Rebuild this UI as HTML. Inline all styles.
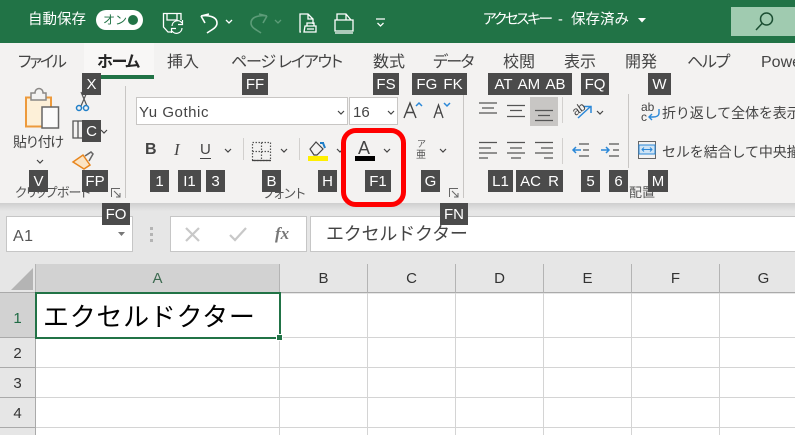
<!DOCTYPE html>
<html lang="ja"><head><meta charset="utf-8"><style>
html,body{margin:0;padding:0;width:795px;height:435px;overflow:hidden}
body{position:relative;background:#fff;font-family:"Liberation Sans","Noto Sans CJK JP",sans-serif}
div,svg{position:absolute}
#w{left:0;top:0;width:795px;height:435px;overflow:hidden}
.t{white-space:nowrap;color:#444;line-height:1}
.p{font-feature-settings:"palt"}
.tab{font-size:16px;top:55px;color:#444;white-space:nowrap;line-height:1;font-feature-settings:"palt"}
.k{position:absolute;background:#4b4b4b;color:#fff;font-size:15px;height:22px;line-height:23px;text-align:center;white-space:nowrap;z-index:5}
svg{overflow:visible}
.sep{background:#c8c6c4;width:1px}
.col{top:264px;height:29px;background:#e6e6e6;border-right:1px solid #b4b4b4;box-sizing:border-box;text-align:center;font-size:15px;line-height:29px;color:#333;border-bottom:1px solid #aaa}
.row{left:0;width:36px;background:#e6e6e6;box-sizing:border-box;border-bottom:1px solid #aaa;border-right:1px solid #aaa;text-align:center;font-size:15px;color:#333}
.h{left:36px;width:759px;height:1px;background:#d4d4d4}
.v{top:293px;width:1px;height:142px;background:#d4d4d4}
</style></head><body><div id="w">
<!-- title bar -->
<div style="left:0;top:0;width:795px;height:43px;background:#217346"></div>
<div class="t" style="left:28px;top:13px;font-size:14.5px;color:#fff">自動保存</div>
<div style="left:96px;top:10px;width:47px;height:20px;border-radius:10px;background:#fff"></div>
<div class="t" style="left:103px;top:14px;font-size:12px;color:#217346">オン</div>
<div style="left:128px;top:15px;width:10px;height:10px;border-radius:5px;background:#217346"></div>
<svg style="left:0;top:0" width="795" height="43" fill="none" stroke="#fff" stroke-width="1.3">
<path d="M181 20V13.500H163.500V27L168 32H171M167 14V20H177V14"/>
<path d="M172 26A5.500 5.500 0 0 1 182 23M182.500 20V24.500H178M182 28A5.500 5.500 0 0 1 172 31M171.500 33V28.500H176" stroke-width="1.200"/>
<path d="M201 16L205 23M201 16L209 14M201 16C207 15 217 16 217 23C217 28 211 30 207 33" stroke-width="1.600"/>
<path d="M226 20L229 23L232 20"/>
<path d="M267 16L263 23M267 16L259 14M267 16C261 15 251 16 251 23C251 28 257 30 261 33" stroke="#5c9c78" stroke-width="1.600"/>
<path d="M275 20L278 23L281 20" stroke="#5c9c78"/>
<path d="M301 32H300V14H308L313 19V24M308 14V19H313M305 26H316V32H304ZM307 26V23H314V26M307 29H314"/>
<path d="M337 20V14H346L351 20M346 14V20H351M335 20H353V31H335ZM335 33H353"/>
<path d="M376 19H385M377.500 23L380.500 26L383.500 23"/>
</svg>
<div class="t p" style="left:483px;top:13px;font-size:14.5px;color:#fff;letter-spacing:-2.100px">アクセスキー</div>
<div class="t" style="left:558px;top:13px;font-size:14.5px;color:#fff">-</div>
<div class="t" style="left:571px;top:13px;font-size:14.5px;color:#fff">保存済み</div>
<svg style="left:638px;top:18px" width="10" height="5"><path d="M0 0H8L4 4.500Z" fill="#fff"/></svg>
<div style="left:731px;top:7px;width:64px;height:29px;background:#a0cbb0"></div>
<svg style="left:754px;top:11px" width="22" height="22" fill="none" stroke="#1c4f33" stroke-width="1.500"><circle cx="12.500" cy="8" r="6"/><path d="M8 12.500L2 19"/></svg>

<!-- tabs -->
<div style="left:0;top:43px;width:795px;height:160px;background:#f3f2f1"></div>
<div style="left:84px;top:43px;width:70px;height:36px;background:#f8f7f6"></div>
<div style="left:84px;top:75px;width:70px;height:4px;background:#217346"></div>
<div class="tab" style="left:18px;letter-spacing:-2.200px">ファイル</div>
<div class="tab" style="left:97px;font-weight:bold;color:#262626;letter-spacing:-1.300px">ホーム</div>
<div class="tab" style="left:167px">挿入</div>
<div class="tab" style="left:231px;letter-spacing:-1.200px">ページ レイアウト</div>
<div class="tab" style="left:373px">数式</div>
<div class="tab" style="left:433px;letter-spacing:-1.600px">データ</div>
<div class="tab" style="left:503px">校閲</div>
<div class="tab" style="left:564px">表示</div>
<div class="tab" style="left:625px">開発</div>
<div class="tab" style="left:687px;letter-spacing:-1.300px">ヘルプ</div>
<div class="tab" style="left:761px">Power</div>

<!-- shadow + formula bar -->
<div style="left:0;top:203px;width:795px;height:61px;background:#e6e6e6"></div>
<div style="left:0;top:203px;width:795px;height:8px;background:linear-gradient(#cfcfcf,#e6e6e6)"></div>

<!-- clipboard -->
<svg style="left:0;top:85px" width="125" height="105" fill="none">
<rect x="26" y="12.500" width="25" height="29" fill="#fdf0d8" stroke="#ed9a3c" stroke-width="2"/>
<path d="M31 8H35C35 2 43 2 43 8H46V15H31Z" fill="#f3f2f1" stroke="#8a8886" stroke-width="1.500"/>
<rect x="42" y="22" width="16.500" height="21" fill="#fbfbfb" stroke="#666" stroke-width="1.500"/>
<path d="M37 75L40 78L43 75" stroke="#444" stroke-width="1.200"/>
<path d="M81 7L87 21M87 7L81 21" stroke="#555" stroke-width="1.200"/>
<circle cx="79" cy="23" r="2.500" stroke="#1f7fc8" stroke-width="1.500"/><circle cx="86" cy="23" r="2.500" stroke="#1f7fc8" stroke-width="1.500"/>
<path d="M82 36H73V53H82M78 36V53" stroke="#555" stroke-width="1.300"/>
<path d="M101 45L104 48L107 45" stroke="#444" stroke-width="1.200"/>
<path d="M73 77L83 70L90 80L84 84Z" fill="#fbe4c4" stroke="#e8861e" stroke-width="1.500"/>
<path d="M85 71L91 67L93 69L89 76" stroke="#666" stroke-width="1.500"/>
</svg>
<div class="t" style="left:13px;top:135px;font-size:14px;letter-spacing:-1.600px">貼り付け</div>
<div class="t p" style="left:15px;top:186px;font-size:13px;color:#555;letter-spacing:-.7px">クリップボード</div>
<svg style="left:111px;top:188px" width="10" height="10" fill="none" stroke="#666"><path d="M.5 9V.5H9M3 3L9 9M5 9H9V5"/></svg>
<div class="sep" style="left:125px;top:86px;height:112px"></div>

<!-- font group -->
<div style="left:136px;top:97px;width:212px;height:28px;box-sizing:border-box;background:#fff;border:1px solid #c8c6c4"></div>
<div class="t" style="left:139px;top:105px;font-size:15px;color:#444;letter-spacing:.55px">Yu Gothic</div>
<div style="left:349px;top:97px;width:49px;height:28px;box-sizing:border-box;background:#fff;border:1px solid #c8c6c4"></div>
<div class="t" style="left:353px;top:105px;font-size:15px">16</div>
<svg style="left:0;top:85px" width="470" height="120" fill="none" stroke="#444" stroke-width="1.200">
<path d="M338 26L341 29L344 26M388 26L391 29L394 26"/>
<path d="M404 33L410 18L416 33M406 27.500H414" stroke-width="1.400"/>
<path d="M416 21L419 18L422 21" stroke="#2b88d8" stroke-width="1.500"/>
<path d="M434 33L438.500 20L443 33M435.500 28H441.500" stroke-width="1.300"/>
<path d="M444 18L447 21L450 18" stroke="#2b88d8" stroke-width="1.500"/>
<path d="M225 64L228 67L231 64M281 64L284 67L287 64M337 64L340 67L343 64M384 64L387 67L390 64M440 64L443 67L446 64"/>
<path d="M252.500 57.500H270.500V75.500H252.500ZM252.500 66.500H270.500M261.500 57.500V75.500" stroke-dasharray="1.500 1.500" stroke="#555"/>
<path d="M252 75.500H271" stroke="#444"/>
<path d="M310 64L316 57L323 64L317 70H314Z" stroke="#444"/>
<path d="M323 58L325 63" stroke="#1f7fc8" stroke-width="2"/>
<path d="M320 58H324" stroke="#1f7fc8" stroke-width="2"/>
</svg>
<div style="left:308px;top:156px;width:20px;height:5px;background:#ffef00"></div>
<div class="t" style="left:145px;top:142px;font-size:16px;font-weight:bold;color:#444">B</div>
<div class="t" style="left:174px;top:141px;font-size:17px;font-style:italic;font-family:'Liberation Serif',serif;color:#444">I</div>
<div class="t" style="left:200px;top:142px;font-size:15px;color:#444">U</div>
<div style="left:200px;top:158px;width:11px;height:1px;background:#444"></div>
<div class="sep" style="left:243px;top:138px;height:22px;background:#d2d0ce"></div>
<div class="sep" style="left:299px;top:138px;height:22px;background:#d2d0ce"></div>
<div class="t" style="left:358px;top:139px;font-size:18px;color:#444">A</div>
<div style="left:355px;top:156px;width:20px;height:5px;background:#000"></div>
<div class="t" style="left:417px;top:140px;font-size:9px;color:#555">ア</div>
<div class="t" style="left:416px;top:151px;font-size:10px;color:#555">亜</div>
<div class="t p" style="left:263px;top:187px;font-size:13px;color:#555">フォント</div>
<svg style="left:449px;top:188px" width="10" height="10" fill="none" stroke="#666"><path d="M.5 9V.5H9M3 3L9 9M5 9H9V5"/></svg>
<div class="sep" style="left:463px;top:86px;height:112px"></div>

<!-- alignment -->
<div style="left:530px;top:97px;width:28px;height:29px;background:#c8c6c4"></div>
<svg style="left:470px;top:85px" width="180" height="90" fill="none" stroke="#555" stroke-width="1.200">
<path d="M9 18H27M12 23H24M9 28H27"/>
<path d="M37 20.500H55M40 25.500H52M37 31.500H55"/>
<path d="M65 25.500H83M68 30.500H80M65 35.500H83"/>
<path d="M9 57.500H27M9 63H21M9 68H27M9 73H18"/>
<path d="M37 57.500H55M40 63H52M37 68H55M41 73H51"/>
<path d="M65 57.500H83M71 63H83M65 68H83M74 73H83"/>
<path d="M108 33L120 22M114 21.500H121V28" stroke="#2b88d8" stroke-width="1.500"/>
<path d="M127 26L130 29L133 26" stroke="#444"/>
<path d="M111 65H103M106 62L103 65L106 68" stroke="#2b88d8" stroke-width="1.500"/>
<path d="M109 59H119M113 65H119M109 71H119M139 59H149M143 65H149M139 71H149"/>
<path d="M131 65H139M136 62L139 65L136 68" stroke="#2b88d8" stroke-width="1.500"/>
</svg>
<div class="sep" style="left:562px;top:97px;height:26px;background:#d2d0ce"></div>
<div class="sep" style="left:562px;top:138px;height:26px;background:#d2d0ce"></div>
<div class="t" style="left:572px;top:103px;font-size:12px;transform:rotate(-35deg);color:#444">ab</div>
<div class="sep" style="left:628px;top:94px;height:74px"></div>

<div class="t" style="left:641px;top:102px;font-size:12px;line-height:10px;color:#444">ab<br>c</div>
<svg style="left:648px;top:108px" width="14" height="12" fill="none" stroke="#2b88d8" stroke-width="1.400"><path d="M11 1V5C11 8 8 9 5 9H1M4 6L1 9L4 12"/></svg>
<div class="t" style="left:662px;top:106px;font-size:14px;letter-spacing:-.1px">折り返して全体を表示する</div>
<svg style="left:638px;top:141px" width="19" height="19" fill="none"><rect x=".5" y=".5" width="17" height="17" stroke="#666"/><rect x="1" y="4" width="16" height="9" fill="#cfe4f5" stroke="#2b88d8"/><path d="M4 8.500H14M6 6.500L4 8.500L6 10.500M12 6.500L14 8.500L12 10.500" stroke="#2b88d8"/></svg>
<div class="t" style="left:662px;top:145px;font-size:14px;letter-spacing:-.1px">セルを結合して中央揃え</div>
<div class="t" style="left:629px;top:186px;font-size:13px;color:#555">配置</div>

<!-- key tips -->
<div class="k" style="left:82px;top:73px;width:19px">X</div>
<div class="k" style="left:242px;top:73px;width:26px">FF</div>
<div class="k" style="left:373px;top:73px;width:26px">FS</div>
<div class="k" style="left:412px;top:73px;width:55px;word-spacing:2px">FG FK</div>
<div class="k" style="left:488px;top:73px;width:84px;word-spacing:2px">AT AM AB</div>
<div class="k" style="left:581px;top:73px;width:28px">FQ</div>
<div class="k" style="left:648px;top:73px;width:23px">W</div>
<div class="k" style="left:82px;top:120px;width:19px">C</div>
<div class="k" style="left:29px;top:170px;width:19px">V</div>
<div class="k" style="left:82px;top:170px;width:26px">FP</div>
<div class="k" style="left:150px;top:170px;width:19px">1</div>
<div class="k" style="left:178px;top:170px;width:23px">I1</div>
<div class="k" style="left:206px;top:170px;width:19px">3</div>
<div class="k" style="left:262px;top:170px;width:19px">B</div>
<div class="k" style="left:318px;top:170px;width:19px">H</div>
<div class="k" style="left:365px;top:170px;width:26px">F1</div>
<div class="k" style="left:421px;top:170px;width:19px">G</div>
<div class="k" style="left:488px;top:170px;width:25px">L1</div>
<div class="k" style="left:516px;top:170px;width:47px;word-spacing:3px">AC R</div>
<div class="k" style="left:581px;top:170px;width:19px">5</div>
<div class="k" style="left:609px;top:170px;width:19px">6</div>
<div class="k" style="left:648px;top:170px;width:20px">M</div>
<div class="k" style="left:102px;top:203px;width:28px">FO</div>
<div class="k" style="left:440px;top:203px;width:28px">FN</div>

<!-- red highlight -->
<div style="left:341px;top:128px;width:65px;height:79px;box-sizing:border-box;border:5px solid #f00;border-radius:15px;z-index:6"></div>

<!-- formula bar -->
<div style="left:6px;top:216px;width:127px;height:36px;box-sizing:border-box;background:#fff;border:1px solid #c6c6c6"></div>
<div class="t" style="left:13px;top:229px;font-size:16px;color:#555;letter-spacing:.5px">A1</div>
<svg style="left:118px;top:232px" width="10" height="5"><path d="M0 0H7L3.500 4Z" fill="#777"/></svg>
<div style="left:150px;top:227px;width:3px;height:3px;background:#b4b4b4;box-shadow:0 6px #b4b4b4,0 12px #b4b4b4"></div>
<div style="left:170px;top:216px;width:137px;height:36px;box-sizing:border-box;background:#fff;border:1px solid #c6c6c6"></div>
<svg style="left:170px;top:216px" width="137" height="36" fill="none" stroke="#c8c8c8" stroke-width="2.200"><path d="M16 12L29 25M29 12L16 25M60 19L65 24L76 12"/></svg>
<div class="t" style="left:275px;top:225px;font-size:17px;font-family:'Liberation Serif',serif;font-style:italic;font-weight:bold;color:#777">fx</div>
<div style="left:310px;top:216px;width:490px;height:36px;box-sizing:border-box;background:#fff;border:1px solid #c6c6c6"></div>
<div class="t" style="left:326px;top:225px;font-size:18px;color:#444;letter-spacing:-.2px">エクセルドクター</div>

<!-- grid -->
<div style="left:0;top:264px;width:795px;height:30px;background:#e6e6e6"></div>
<div style="left:0;top:264px;width:36px;height:29px;box-sizing:border-box;border-right:1px solid #b4b4b4;border-bottom:1px solid #aaa"></div>
<svg style="left:11px;top:268px" width="23" height="23"><path d="M22 0V22H0Z" fill="#b4b4b4"/></svg>
<div class="col" style="left:36px;width:244px;background:#d2d2d2;color:#3c6a50">A</div>
<div class="col" style="left:280px;width:88px">B</div>
<div class="col" style="left:368px;width:88px">C</div>
<div class="col" style="left:456px;width:88px">D</div>
<div class="col" style="left:544px;width:88px">E</div>
<div class="col" style="left:632px;width:88px">F</div>
<div class="col" style="left:720px;width:88px">G</div>
<div class="row" style="top:293px;height:45px;line-height:51px;background:#d2d2d2;color:#1f6b44">1</div>
<div class="row" style="top:338px;height:30px;line-height:31px">2</div>
<div class="row" style="top:368px;height:30px;line-height:32px">3</div>
<div class="row" style="top:398px;height:30px;line-height:32px">4</div>
<div class="row" style="top:428px;height:7px;border-bottom:0"></div>
<div class="h" style="top:337px"></div><div class="h" style="top:367px"></div><div class="h" style="top:397px"></div><div class="h" style="top:427px"></div>
<div class="v" style="left:279px"></div><div class="v" style="left:367px"></div><div class="v" style="left:455px"></div><div class="v" style="left:543px"></div><div class="v" style="left:631px"></div><div class="v" style="left:719px"></div>
<div style="left:35px;top:292px;width:246px;height:47px;box-sizing:border-box;border:2px solid #217346;background:#fff"></div>
<div style="left:277px;top:335px;width:5px;height:5px;background:#217346;outline:1px solid #fff"></div>
<div class="t" style="left:43px;top:304px;font-size:26px;color:#000;letter-spacing:.7px">エクセルドクター</div>
</div></body></html>
